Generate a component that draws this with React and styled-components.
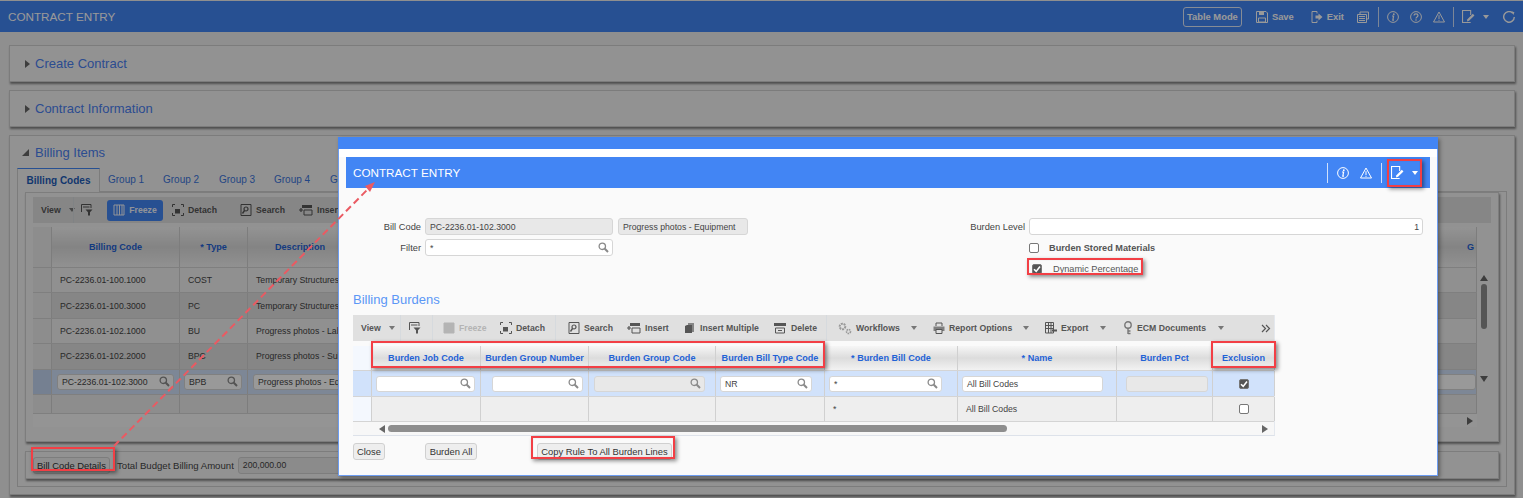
import React from 'react';
import styled, { createGlobalStyle } from 'styled-components';

const Global = createGlobalStyle`
    html, body { margin: 0; padding: 0; background: #eeeeee; }
    body { font-family: "Liberation Sans", Arial, sans-serif; color: #444; }
    * { box-sizing: border-box; }
`;

const Page = styled.div`
    position: relative;
    width: 1523px;
    height: 498px;
    overflow: hidden;
    padding-top: 1px;
`;

const Scrim = styled.div`
    position: absolute;
    inset: 0;
    background: rgba(0, 0, 0, 0.4);
`;

const TopBar = styled.div`
    height: 31px;
    background: #4285f4;
    color: #fff;
    display: flex;
    align-items: center;
    justify-content: space-between;
    padding: 0 8px;
`;

const BarTitle = styled.div`
    font-size: 11.7px;
`;

const BarActions = styled.div`
    display: flex;
    align-items: center;
`;

const TableModeBtn = styled.div`
    width: 59px;
    height: 20px;
    border: 1px solid #dfe9fb;
    border-radius: 3px;
    font-size: 9.4px;
    font-weight: bold;
    display: flex;
    align-items: center;
    justify-content: center;
`;

const BarItem = styled.div`
    display: flex;
    align-items: center;
    gap: 4px;
    margin-left: ${props => props.$ml || 0}px;
    font-size: 9.4px;
    font-weight: bold;
    height: 20px;
`;

const BarSep = styled.div`
    width: 1px;
    height: 20px;
    background: rgba(255, 255, 255, 0.75);
    margin-left: ${props => props.$ml || 0}px;
`;

const Content = styled.div`
    padding: 13px 8px 0 9px;
    display: flex;
    flex-direction: column;
    gap: 8px;
`;

const Panel = styled.div`
    background: #f4f4f4;
    border: 1px solid #cfcfcf;
    box-shadow: 1px 2px 2px rgba(0, 0, 0, 0.45);
    height: ${props => props.$h}px;
`;

const PanelHead = styled.div`
    height: ${props => props.$h}px;
    display: flex;
    align-items: center;
    gap: 5px;
    padding-left: 15px;
    font-size: 13px;
    color: #4a7ff0;
`;

const Tri = styled.span`
    width: 0;
    height: 0;
    border-top: 4.5px solid transparent;
    border-bottom: 4.5px solid transparent;
    border-left: 5px solid #666;
`;

const TriOpen = styled.span`
    width: 0;
    height: 0;
    margin-left: -3px;
    margin-right: 1px;
    border-left: 7px solid transparent;
    border-bottom: 7px solid #666;
`;

const PanelBody = styled.div`
    padding: 0 7px;
`;

const Tabs = styled.div`
    display: flex;
    height: 23px;
    align-items: flex-end;
`;

const Tab = styled.div`
    height: 23px;
    font-size: 10px;
    display: flex;
    align-items: center;
    width: ${props => props.$w}px;
    color: #3b74dc;
`;

const ActiveTab = styled.div`
    width: 83px;
    height: 24px;
    margin-right: 8px;
    background: #f4f4f4;
    border: 1px solid #cfcfcf;
    border-top: 1px solid #4285f4;
    border-bottom: none;
    margin-bottom: -1px;
    position: relative;
    font-size: 10px;
    font-weight: bold;
    color: #1d5cb8;
    display: flex;
    align-items: center;
    justify-content: center;
`;

const TabBody = styled.div`
    border: 1px solid #cfcfcf;
    height: 296px;
    padding: 0 7px;
`;

const Card = styled.div`
    background: #f4f4f4;
    border: 1px solid #d0d0d0;
    box-shadow: 1px 2px 2px rgba(0, 0, 0, 0.45);
    height: ${props => props.$h}px;
    margin-bottom: 9px;
    padding: ${props => props.$pad};
`;

const Toolbar = styled.div`
    height: 26px;
    background: #e0e0e0;
    display: flex;
    align-items: center;
    padding-left: 8px;
    font-size: 8.7px;
    font-weight: bold;
    color: #555;
    white-space: nowrap;
    overflow: hidden;
`;

const ToolItem = styled.div`
    display: flex;
    align-items: center;
    gap: 4px;
    flex: none;
    width: ${props => (props.$w ? props.$w + 'px' : 'auto')};
    margin-left: ${props => props.$ml || 0}px;
    color: ${props => (props.$off ? '#b4b4b4' : '#555')};
`;

const ToolActive = styled.div`
    display: flex;
    align-items: center;
    justify-content: center;
    gap: 4px;
    flex: none;
    width: 56px;
    height: 21px;
    margin-left: ${props => props.$ml || 0}px;
    background: #4285f4;
    border-radius: 3px;
    color: #f2f6fe;
`;

const ToolSep = styled.div`
    width: 1px;
    height: 26px;
    flex: none;
    background: #d6dade;
    margin-left: ${props => props.$ml || 0}px;
`;

const Caret = styled.span`
    width: 0;
    height: 0;
    flex: none;
    margin-left: ${props => props.$ml || 0}px;
    border-left: 3.5px solid transparent;
    border-right: 3.5px solid transparent;
    border-top: 4px solid ${props => props.$color || '#777'};
`;

const GridWrap = styled.div`
    display: flex;
    margin-top: 4px;
`;

const GridMain = styled.div`
    flex: 1;
    min-width: 0;
`;

const VScroll = styled.div`
    width: 14px;
    flex: none;
    padding-top: 41px;
`;

const VTrack = styled.div`
    height: 146px;
    background: #f4f4f4;
    display: flex;
    flex-direction: column;
    align-items: center;
    padding-top: 7px;
`;

const ArrowUp = styled.span`
    width: 0;
    height: 0;
    border-left: 4px solid transparent;
    border-right: 4px solid transparent;
    border-bottom: 6px solid #666;
`;

const ArrowDown = styled.span`
    width: 0;
    height: 0;
    margin-top: 47px;
    border-left: 4px solid transparent;
    border-right: 4px solid transparent;
    border-top: 6px solid #666;
`;

const VThumb = styled.div`
    width: 6px;
    height: 45px;
    margin-top: 3px;
    border-radius: 3px;
    background: #8e8e8e;
`;

const BgRow = styled.div`
    display: grid;
    grid-template-columns: 19px 128px 68px 105px 1fr;
    height: ${props => props.$h}px;
    background: ${props => props.$bg};
    border-bottom: 1px solid #d4d4d4;
`;

const Cell = styled.div`
    display: flex;
    align-items: center;
    justify-content: ${props => props.$align || 'flex-start'};
    padding: ${props => props.$pad || '0 8px'};
    border-right: 1px solid #d0d0d0;
    font-size: 8.7px;
    color: #444;
    white-space: nowrap;
    overflow: hidden;
    min-width: 0;
`;

const HeadCell = styled(Cell)`
    background: linear-gradient(#f6f6f6, #dcdcdc 50%, #f2f2f2);
    color: #1f62d6;
    font-weight: bold;
    font-size: 9.1px;
    padding: 0 2px;
`;

const GutterCell = styled.div`
    background: ${props => props.$bg || 'transparent'};
    border-right: 1px solid #d0d0d0;
`;

const InputBox = styled.div`
    flex: 1;
    min-width: 0;
    height: ${props => props.$h || 16}px;
    background: ${props => (props.$off ? '#e8e8e8' : '#fff')};
    border: 1px solid #d6d6d6;
    border-radius: 3px;
    display: flex;
    align-items: center;
    justify-content: space-between;
    padding: 0 3px 0 4px;
    font-size: 8.7px;
    color: #444;
    margin-right: ${props => props.$mr || 0}px;
`;

const HScroll = styled.div`
    height: 13px;
    background: #f7f7f7;
    display: flex;
    align-items: center;
    justify-content: space-between;
    padding: ${props => props.$pad};
`;

const ArrowLeft = styled.span`
    width: 0;
    height: 0;
    border-top: 4px solid transparent;
    border-bottom: 4px solid transparent;
    border-right: 6px solid #666;
`;

const ArrowRight = styled.span`
    width: 0;
    height: 0;
    border-top: 4px solid transparent;
    border-bottom: 4px solid transparent;
    border-left: 6px solid #666;
`;

const HThumb = styled.div`
    width: 619px;
    height: 7px;
    margin: 0 auto 0 3px;
    border-radius: 4px;
    background: #8e8e8e;
`;

const FooterRow = styled.div`
    display: flex;
    align-items: center;
    height: 100%;
    gap: 7px;
`;

const Btn = styled.div`
    height: 17px;
    width: ${props => props.$w}px;
    margin-left: ${props => props.$ml || 0}px;
    flex: none;
    display: flex;
    align-items: center;
    justify-content: center;
    background: #eeeeee;
    border: 1px solid #d0d0d0;
    border-radius: 3px;
    font-size: 9.4px;
    color: #333;
    white-space: nowrap;
`;

const PlainLabel = styled.div`
    font-size: 9.6px;
    color: #444;
    white-space: nowrap;
`;

const TotalBox = styled.div`
    width: 200px;
    height: 17px;
    margin-left: -3px;
    border: 1px solid #d0d0d0;
    border-radius: 3px;
    background: #e8e8e8;
    font-size: 8.7px;
    display: flex;
    align-items: center;
    padding-left: 4px;
`;

const Modal = styled.div`
    position: absolute;
    left: 338px;
    top: 137px;
    width: 1100px;
    height: 339px;
    background: #fafafa;
    border: 1px solid #6d9df2;
    border-top: none;
    box-shadow: 2px 2px 4px rgba(0, 0, 0, 0.35);
`;

const ModalTop = styled.div`
    height: 12px;
    background: #4285f4;
    margin: 0 -1px;
`;

const ModalGap = styled.div`
    height: 8px;
    background: #fff;
`;

const ModalHead = styled(TopBar)`
    margin: 0 7px;
    padding: 0 12px 0 7px;
`;

const ModalBody = styled.div`
    padding: 30px 14px 0 14px;
`;

const FormGrid = styled.div`
    display: grid;
    grid-template-columns: 72px 188px 184px 187px 45px auto;
    grid-auto-rows: 17px;
    row-gap: 4px;
    margin-left: 0;
`;

const FormLabel = styled.div`
    display: flex;
    align-items: center;
    justify-content: flex-end;
    padding-right: 4px;
    font-size: 9.3px;
    color: #444;
    white-space: nowrap;
`;

const DescBox = styled(InputBox)`
    flex: none;
    width: 130px;
    margin-left: 5px;
`;

const FormCell = styled.div`
    display: flex;
    align-items: center;
    grid-column: ${props => props.$col || 'auto'};
`;

const CheckRow = styled.div`
    display: flex;
    align-items: center;
    margin-left: ${props => props.$ml || 0}px;
    gap: ${props => props.$gap}px;
    font-size: 9.2px;
    font-weight: ${props => (props.$bold ? 'bold' : 'normal')};
    color: #555;
    white-space: nowrap;
`;

const Check = styled.span`
    width: 10px;
    height: 10px;
    flex: none;
    border-radius: 2px;
    border: 1px solid #777;
    background: ${props => (props.$on ? '#555' : '#fff')};
    display: flex;
    align-items: center;
    justify-content: center;
`;

const SectionTitle = styled.div`
    margin-top: 15px;
    height: 23px;
    font-size: 13px;
    color: #5b97f6;
`;

const BurdenBox = styled.div`
    width: 922px;
    border-bottom: 1px solid #dde2ea;
    border-right: 1px solid #e4e8ee;
`;

const BurdenRow = styled.div`
    display: grid;
    grid-template-columns: 19px 109px 108px 127px 109px 133px 159px 96px 62px;
    height: ${props => props.$h}px;
    background: ${props => props.$bg || '#eeeeee'};
    border-bottom: 1px solid #d4d4d4;
`;

const BurdenHead = styled(BurdenRow)`
    margin-top: 5px;
`;

const ButtonRow = styled.div`
    display: flex;
    margin-top: 7px;
`;

const Annotation = styled.div`
    position: absolute;
    left: ${props => props.$x}px;
    top: ${props => props.$y}px;
    width: ${props => props.$w}px;
    height: ${props => props.$h}px;
    border: 2px solid #f23f45;
    box-shadow: 2px 2px 4px rgba(0, 0, 0, 0.45), inset 0 0 1px rgba(0, 0, 0, 0.2);
`;

const ArrowLayer = styled.svg`
    position: absolute;
    left: 0;
    top: 0;
    pointer-events: none;
`;

// icons
const Svg = ({ s = 12, children }) => (
    <svg width={s} height={s} viewBox="0 0 12 12" fill="none" stroke="currentColor" style={{ flex: 'none' }}>{children}</svg>
);

const SaveIcon = () => (
    <Svg>
        <path d="M.5.5h9.5l1.5 1.5v9.5H.5z" strokeWidth="1" />
        <path d="M3 1h5v3H3z" fill="currentColor" stroke="none" />
        <path d="M2.5 7h7v4h-7z" strokeWidth="1" />
    </Svg>
);
const ExitIcon = () => (
    <Svg>
        <path d="M6 2.5V.5H1v11h5V9.5" strokeWidth="1" />
        <path d="M4.5 4.5H7.5V2.5L11.5 6L7.5 9.5V7.5H4.5z" fill="currentColor" stroke="none" />
    </Svg>
);
const PagesIcon = () => (
    <Svg>
        <path d="M3 3V1h8.5v7H9.5" strokeWidth="1" />
        <path d="M.5 3.5h9v8h-9z" strokeWidth="1" />
        <path d="M2 5.5h6M2 7.5h6M2 9.5h6" strokeWidth="1" />
    </Svg>
);
const InfoIcon = () => (
    <Svg>
        <circle cx="6" cy="6" r="5.4" strokeWidth="1" />
        <path d="M5 5h1.6L5.8 9.2H7" strokeWidth="1.2" />
        <circle cx="6.8" cy="3.2" r=".9" fill="currentColor" stroke="none" />
    </Svg>
);
const HelpIcon = () => (
    <Svg>
        <circle cx="6" cy="6" r="5.4" strokeWidth="1" />
        <path d="M4 4.6C4 2.4 8 2.4 8 4.6C8 6 6 5.8 6 7.4" strokeWidth="1.2" />
        <circle cx="6" cy="9" r=".8" fill="currentColor" stroke="none" />
    </Svg>
);
const WarnIcon = () => (
    <Svg>
        <path d="M6 1L11.5 11H.5z" strokeWidth="1" />
        <path d="M6 4.2V8M6 8.8v1" strokeWidth="1" />
    </Svg>
);
const NoteIcon = ({ s = 13 }) => (
    <Svg s={s}>
        <path d="M8 11.5H.5V.5h7.5v4" strokeWidth="1" />
        <path d="M4.5 10.5L5 8.5L10 3.5L11.5 5L6.5 10z" fill="currentColor" stroke="none" />
    </Svg>
);
const RefreshIcon = () => (
    <Svg>
        <path d="M9.8 2.2A5.3 5.3 0 1 0 11.3 6" strokeWidth="1.4" />
        <path d="M8 .4h3v3z" fill="currentColor" stroke="none" transform="rotate(20 9 2)" />
    </Svg>
);
const SearchIcon = () => (
    <svg width="11" height="11" viewBox="0 0 11 11" fill="none" stroke="#8a8a8a" style={{ flex: 'none' }}>
        <circle cx="4.3" cy="4.3" r="3.2" strokeWidth="1.3" />
        <path d="M6.8 6.8L10 10" strokeWidth="2" />
    </svg>
);
const FilterIcon = () => (
    <Svg>
        <path d="M.5 8V.5h9.5V4" strokeWidth="1" />
        <path d="M2 3h6.5" strokeWidth="1" />
        <path d="M4.5 5.5h7L9 8.2V11.5H7V8.2z" fill="currentColor" stroke="none" />
    </Svg>
);
const FreezeIcon = ({ off }) => (
    <Svg>
        <path d="M1 1h10v10H1z" strokeWidth="1" fill={off ? 'currentColor' : 'none'} />
        <path d="M4 1v10M6.5 1v10M9 1v10" strokeWidth="1" />
    </Svg>
);
const DetachIcon = () => (
    <Svg>
        <path d="M.5 3V.5H3M9 .5h2.5V3M11.5 9v2.5H9M3 11.5H.5V9" strokeWidth="1" />
        <path d="M3 5h5v4.5H3z" fill="currentColor" stroke="none" />
    </Svg>
);
const ScanIcon = () => (
    <Svg>
        <path d="M1 .5h10v11H1z" strokeWidth="1" />
        <circle cx="6" cy="5" r="2" strokeWidth="1.2" />
        <path d="M4.5 6.5L2.5 9.5" strokeWidth="1.4" />
    </Svg>
);
const InsertIcon = () => (
    <svg width="14" height="12" viewBox="0 0 14 12" fill="none" stroke="currentColor" style={{ flex: 'none' }}>
        <path d="M3 1h10v3H3z" fill="currentColor" stroke="none" />
        <path d="M5 6h8v5H5z" strokeWidth="1" />
        <path d="M0 6h4M2 4v4" strokeWidth="1.2" />
    </svg>
);
const StackIcon = () => (
    <Svg>
        <path d="M4 1h6v9H8V3H4z" fill="currentColor" stroke="none" opacity=".65" />
        <path d="M1 4l2-1h5v8H1z" fill="currentColor" stroke="none" />
    </Svg>
);
const DeleteIcon = () => (
    <svg width="14" height="12" viewBox="0 0 14 12" fill="none" stroke="currentColor" style={{ flex: 'none' }}>
        <path d="M1 1h12v3H1z" fill="currentColor" stroke="none" />
        <path d="M2.5 6h9v5h-9z" strokeWidth="1" />
        <path d="M5 8.5h4" strokeWidth="1" />
    </svg>
);
const GearIcon = () => (
    <svg width="14" height="13" viewBox="0 0 14 13" fill="none" stroke="#999" style={{ flex: 'none' }}>
        <circle cx="4.5" cy="4.5" r="2.8" strokeWidth="2" strokeDasharray="2 .8" />
        <circle cx="10.5" cy="9.5" r="2" strokeWidth="1.6" strokeDasharray="1.5 .7" />
    </svg>
);
const PrintIcon = () => (
    <Svg>
        <path d="M3 4V1h6v3" strokeWidth="1" />
        <path d="M.5 4.5h11v4.5H.5z" fill="currentColor" stroke="none" opacity=".7" />
        <path d="M3 7.5h6v4H3z" fill="#e0e0e0" strokeWidth="1" />
    </Svg>
);
const ExportIcon = () => (
    <Svg>
        <path d="M.5.5h8v10.5h-8zM.5 3.5h8M.5 6.5h8M3.5.5V11M6 .5V11" strokeWidth="1" />
        <path d="M7 8.5h5" strokeWidth="2" />
    </Svg>
);
const PinIcon = () => (
    <svg width="10" height="14" viewBox="0 0 10 14" fill="none" stroke="#777" style={{ flex: 'none' }}>
        <circle cx="5" cy="4" r="3.2" strokeWidth="1.4" />
        <path d="M5 7v6M5 10h2.5M5 12.5h2.5" strokeWidth="1.4" />
    </svg>
);

const BarButtons = ({ children }) => <BarItem>{children}</BarItem>;

const FormSearch = ({ value, off, h }) => (
    <InputBox $off={off} $h={h}>
        <span>{value}</span>
        <SearchIcon />
    </InputBox>
);

const BG_ROWS = [
    { code: 'PC-2236.01-100.1000', type: 'COST', desc: 'Temporary Structures', bg: '#f0f0f0' },
    { code: 'PC-2236.01-100.3000', type: 'PC', desc: 'Temporary Structures', bg: '#e0e0e0' },
    { code: 'PC-2236.01-102.1000', type: 'BU', desc: 'Progress photos - Labor', bg: '#f0f0f0' },
    { code: 'PC-2236.01-102.2000', type: 'BPC', desc: 'Progress photos - Subcontract', bg: '#e0e0e0' },
];

const BURDEN_COLS = ['Burden Job Code', 'Burden Group Number', 'Burden Group Code', 'Burden Bill Type Code', '* Burden Bill Code', '* Name', 'Burden Pct', 'Exclusion'];

const ANNOTATIONS = [
    { x: 31, y: 447, w: 84, h: 24 },
    { x: 1387, y: 159, w: 35, h: 28 },
    { x: 1027, y: 258, w: 116, h: 17 },
    { x: 371, y: 341, w: 454, h: 27 },
    { x: 1211, y: 341, w: 65, h: 27 },
    { x: 531, y: 436, w: 144, h: 23 },
];

const App = () => {
    return (
        <Page>
            <Global />
            <TopBar>
                <BarTitle>CONTRACT ENTRY</BarTitle>
                <BarActions>
                    <TableModeBtn>Table Mode</TableModeBtn>
                    <BarItem $ml={14}><SaveIcon />Save</BarItem>
                    <BarItem $ml={17}><ExitIcon />Exit</BarItem>
                    <BarItem $ml={13}><PagesIcon /></BarItem>
                    <BarSep $ml={9} />
                    <BarItem $ml={8}><InfoIcon /></BarItem>
                    <BarItem $ml={11}><HelpIcon /></BarItem>
                    <BarItem $ml={11}><WarnIcon /></BarItem>
                    <BarSep $ml={8} />
                    <BarItem $ml={8}><NoteIcon /></BarItem>
                    <Caret $ml={8} $color="#fff" />
                    <BarItem $ml={14}><RefreshIcon /></BarItem>
                </BarActions>
            </TopBar>

            <Content>
                <Panel $h={37}>
                    <PanelHead $h={35}><Tri />Create Contract</PanelHead>
                </Panel>
                <Panel $h={37}>
                    <PanelHead $h={35}><Tri />Contract Information</PanelHead>
                </Panel>
                <Panel $h={360}>
                    <PanelHead $h={32}><TriOpen />Billing Items</PanelHead>
                    <PanelBody>
                        <Tabs>
                            <ActiveTab>Billing Codes</ActiveTab>
                            <Tab $w={55}>Group 1</Tab>
                            <Tab $w={56}>Group 2</Tab>
                            <Tab $w={55}>Group 3</Tab>
                            <Tab $w={56}>Group 4</Tab>
                            <Tab $w={40}>Group 5</Tab>
                        </Tabs>
                        <TabBody>
                            <Card $h={250} $pad="4px 7px 0 7px">
                                <Toolbar>
                                    <ToolItem $w={32}>View<Caret $ml={4} /></ToolItem>
                                    <ToolSep />
                                    <ToolItem $ml={7} $w={12}><FilterIcon /></ToolItem>
                                    <ToolActive $ml={14}><FreezeIcon />Freeze</ToolActive>
                                    <ToolItem $ml={9} $w={68}><DetachIcon />Detach</ToolItem>
                                    <ToolItem $w={59}><ScanIcon />Search</ToolItem>
                                    <ToolItem><InsertIcon />Insert</ToolItem>
                                </Toolbar>
                                <GridWrap>
                                    <GridMain>
                                        <BgRow $h={41} $bg="#f0f0f0">
                                            <GutterCell $bg="#ececec" />
                                            <HeadCell $align="center">Billing Code</HeadCell>
                                            <HeadCell $align="center">* Type</HeadCell>
                                            <HeadCell $align="center">Description</HeadCell>
                                            <HeadCell $align="flex-end">G</HeadCell>
                                        </BgRow>
                                        {BG_ROWS.map(row => (
                                            <BgRow key={row.code} $h={25.4} $bg={row.bg}>
                                                <GutterCell $bg="#ececec" />
                                                <Cell>{row.code}</Cell>
                                                <Cell>{row.type}</Cell>
                                                <Cell>{row.desc}</Cell>
                                                <Cell />
                                            </BgRow>
                                        ))}
                                        <BgRow $h={25.4} $bg="#d1e2fb">
                                            <GutterCell $bg="#c3d6f2" />
                                            <Cell $pad="0 5px"><FormSearch value="PC-2236.01-102.3000" /></Cell>
                                            <Cell $pad="0 5px 0 4px"><FormSearch value="BPB" /></Cell>
                                            <Cell $pad="0 0 0 5px"><InputBox $mr={-4}>Progress photos - Equipment</InputBox></Cell>
                                            <Cell $pad="0"><InputBox /></Cell>
                                        </BgRow>
                                        <BgRow $h={19.5} $bg="#ececec">
                                            <GutterCell />
                                            <Cell />
                                            <Cell />
                                            <Cell />
                                            <Cell />
                                        </BgRow>
                                        <HScroll $pad="0 4px 0 1150px"><ArrowRight style={{ marginLeft: 'auto' }} /></HScroll>
                                    </GridMain>
                                    <VScroll>
                                        <VTrack>
                                            <ArrowUp />
                                            <VThumb />
                                            <ArrowDown />
                                        </VTrack>
                                    </VScroll>
                                </GridWrap>
                            </Card>
                            <Card $h={28} $pad="0 0 0 7px">
                                <FooterRow>
                                    <Btn $w={77}>Bill Code Details</Btn>
                                    <PlainLabel>Total Budget Billing Amount</PlainLabel>
                                    <TotalBox>200,000.00</TotalBox>
                                </FooterRow>
                            </Card>
                        </TabBody>
                    </PanelBody>
                </Panel>
            </Content>

            <Scrim />

            <Modal>
                <ModalTop />
                <ModalGap />
                <ModalHead>
                    <BarTitle>CONTRACT ENTRY</BarTitle>
                    <BarActions>
                        <BarSep />
                        <BarItem $ml={9}><InfoIcon /></BarItem>
                        <BarItem $ml={11}><WarnIcon /></BarItem>
                        <BarSep $ml={9} />
                        <BarItem $ml={9}><NoteIcon /></BarItem>
                        <Caret $ml={8} $color="#fff" />
                    </BarActions>
                </ModalHead>
                <ModalBody>
                    <FormGrid>
                        <FormLabel>Bill Code</FormLabel>
                        <FormCell><InputBox $off $h={17}>PC-2236.01-102.3000</InputBox></FormCell>
                        <FormCell $col="3 / span 2"><DescBox $off $h={17}>Progress photos - Equipment</DescBox></FormCell>
                        <FormLabel>Burden Level</FormLabel>
                        <FormCell>
                            <InputBox $h={17}><span />1</InputBox>
                        </FormCell>
                        <FormLabel>Filter</FormLabel>
                        <FormCell><FormSearch value="*" h={17} /></FormCell>
                        <FormCell $col="6">
                            <CheckRow $gap={10} $bold><Check />Burden Stored Materials</CheckRow>
                        </FormCell>
                        <FormCell $col="6">
                            <CheckRow $ml={3} $gap={11}>
                                <Check $on><CheckMark /></Check>
                                Dynamic Percentage
                            </CheckRow>
                        </FormCell>
                    </FormGrid>
                    <SectionTitle>Billing Burdens</SectionTitle>
                    <BurdenBox>
                        <Toolbar>
                            <ToolItem $w={31}>View<Caret $ml={4} /></ToolItem>
                            <ToolSep $ml={8} />
                            <ToolItem $ml={8} $w={12}><FilterIcon /></ToolItem>
                            <ToolSep $ml={11} />
                            <ToolItem $ml={10} $w={57} $off><FreezeIcon off />Freeze</ToolItem>
                            <ToolItem $w={55}><DetachIcon />Detach</ToolItem>
                            <ToolSep />
                            <ToolItem $ml={12} $w={59}><ScanIcon />Search</ToolItem>
                            <ToolItem $w={57}><InsertIcon />Insert</ToolItem>
                            <ToolItem $w={89}><StackIcon />Insert Multiple</ToolItem>
                            <ToolItem $w={53}><DeleteIcon />Delete</ToolItem>
                            <ToolSep />
                            <ToolItem $ml={11} $w={95}><GearIcon />Workflows<Caret $ml={7} /></ToolItem>
                            <ToolItem $w={112}><PrintIcon />Report Options<Caret $ml={7} /></ToolItem>
                            <ToolItem $w={78}><ExportIcon />Export<Caret $ml={7} /></ToolItem>
                            <ToolItem $w={138}><PinIcon />ECM Documents<Caret $ml={8} /></ToolItem>
                            <ToolItem>
                                <svg width="10" height="9" viewBox="0 0 10 9" fill="none" stroke="#555" strokeWidth="1.2"><path d="M1 1l3.5 3.5L1 8M5 1l3.5 3.5L5 8" /></svg>
                            </ToolItem>
                        </Toolbar>
                        <BurdenHead $h={25} $bg="#f4f8fe">
                            <GutterCell />
                            {BURDEN_COLS.map(col => <HeadCell key={col} $align="center">{col}</HeadCell>)}
                        </BurdenHead>
                        <BurdenRow $h={26} $bg="#d1e2fb">
                            <GutterCell />
                            <Cell $pad="0 5px 0 4px"><FormSearch /></Cell>
                            <Cell $pad="0 5px 0 11px"><FormSearch /></Cell>
                            <Cell $pad="0 10px 0 5px"><FormSearch off /></Cell>
                            <Cell $pad="0 12px 0 4px"><FormSearch value="NR" /></Cell>
                            <Cell $pad="0 15px 0 4px"><FormSearch value="*" /></Cell>
                            <Cell $pad="0 13px 0 4px"><InputBox>All Bill Codes</InputBox></Cell>
                            <Cell $pad="0 4px 0 9px"><InputBox $off /></Cell>
                            <Cell $align="center"><Check $on><CheckMark /></Check></Cell>
                        </BurdenRow>
                        <BurdenRow $h={25}>
                            <GutterCell $bg="#f4f8fe" />
                            <Cell />
                            <Cell />
                            <Cell />
                            <Cell />
                            <Cell $pad="0 8px 0 8px">*</Cell>
                            <Cell $pad="0 8px 0 8px">All Bill Codes</Cell>
                            <Cell />
                            <Cell $align="center"><Check /></Cell>
                        </BurdenRow>
                        <HScroll $pad="0 6px 0 26px">
                            <ArrowLeft />
                            <HThumb />
                            <ArrowRight />
                        </HScroll>
                    </BurdenBox>
                    <ButtonRow>
                        <Btn $w={32}>Close</Btn>
                        <Btn $w={52} $ml={40}>Burden All</Btn>
                        <Btn $w={135} $ml={60}>Copy Rule To All Burden Lines</Btn>
                    </ButtonRow>
                </ModalBody>
            </Modal>

            {ANNOTATIONS.map(box => <Annotation key={box.x} $x={box.x} $y={box.y} $w={box.w} $h={box.h} />)}

            <ArrowLayer width="1523" height="498">
                <path d="M114 446L368 189" stroke="#ea5a62" strokeWidth="2" strokeDasharray="7 4" />
                <path d="M375 182L370 192L365 186z" fill="#ea5a62" />
            </ArrowLayer>
        </Page>
    );
};

const CheckMark = () => (
    <svg width="8" height="8" viewBox="0 0 8 8" fill="none" stroke="#fff" strokeWidth="1.6"><path d="M1 4.2L3.2 6.4L7 1.5" /></svg>
);

export default App;
